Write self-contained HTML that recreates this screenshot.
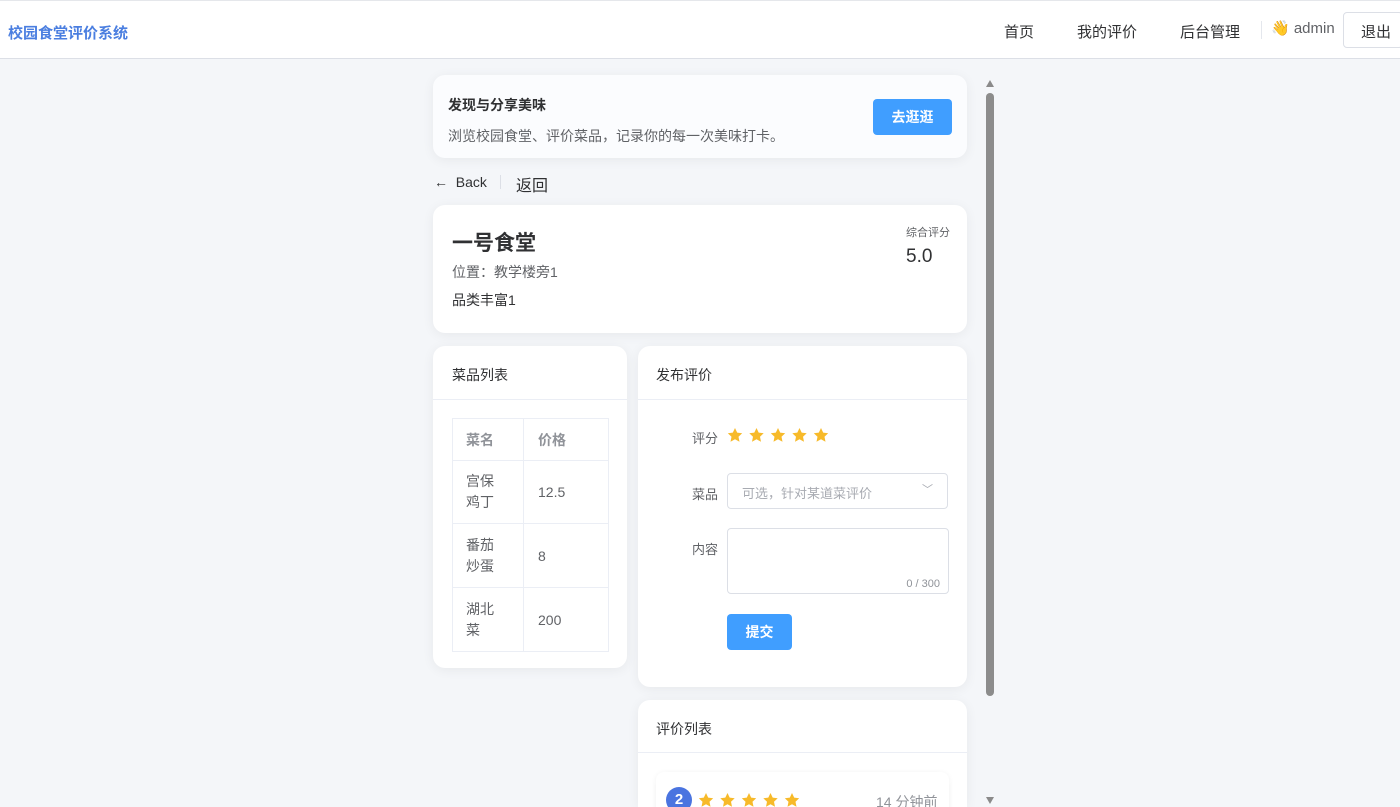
<!DOCTYPE html>
<html><head><meta charset="utf-8"><style>
*{box-sizing:border-box;margin:0;padding:0}
html{width:1400px;height:807px;overflow:hidden}
body{width:1400px;height:807px;overflow:hidden;background:#f4f6f9;font-family:"Liberation Sans","Noto Sans CJK SC",sans-serif;color:#303133;position:relative}
.hdr{position:absolute;left:0;top:0;width:1400px;height:59px;background:#fff;border-top:1px solid #e5e7eb;border-bottom:1px solid #dcdfe6}
.abs{position:absolute}
.card{position:absolute;background:#fff;border-radius:12px;box-shadow:0 2px 12px rgba(0,0,0,.06)}
</style></head><body>
<div class="hdr">
 <div class="abs" style="left:8px;top:21px;font-size:15px;font-weight:bold;color:#4a7ee0">校园食堂评价系统</div>
 <div class="abs" style="left:1004px;top:20px;font-size:15px;color:#303133">首页</div>
 <div class="abs" style="left:1077px;top:20px;font-size:15px">我的评价</div>
 <div class="abs" style="left:1180px;top:20px;font-size:15px">后台管理</div>
 <div class="abs" style="left:1261px;top:20px;width:1px;height:18px;background:#e4e7ed"></div>
 <div class="abs" style="left:1271px;top:18px;font-size:15px;color:#606266">👋 admin</div>
 <div class="abs" style="left:1343px;top:11px;width:60px;height:36px;border:1px solid #dcdfe6;border-radius:4px;background:#fff;font-size:15px;padding:8px 0 0 17px">退出</div>
</div>
<div class="card" style="left:433px;top:75px;width:534px;height:83px;background:#fbfcfe">
 <div class="abs" style="left:15px;top:20px;font-size:14px;font-weight:bold">发现与分享美味</div>
 <div class="abs" style="left:15px;top:51px;font-size:14px;color:#606266">浏览校园食堂、评价菜品，记录你的每一次美味打卡。</div>
 <div class="abs" style="left:440px;top:24px;width:79px;height:36px;background:#409eff;border-radius:4px;color:#fff;font-size:14px;font-weight:bold;text-align:center;line-height:36px">去逛逛</div>
</div>
<div class="abs" style="left:434px;top:174px;font-size:14px;color:#303133">←&nbsp; Back</div>
<div class="abs" style="left:500px;top:175px;width:1px;height:14px;background:#dcdfe6"></div>
<div class="abs" style="left:516px;top:172px;font-size:16px">返回</div>
<div class="card" style="left:433px;top:205px;width:534px;height:128px">
 <div class="abs" style="left:19px;top:22px;font-size:21px;font-weight:bold">一号食堂</div>
 <div class="abs" style="left:19px;top:57px;font-size:14px;color:#606266">位置：教学楼旁1</div>
 <div class="abs" style="left:19px;top:85px;font-size:14px">品类丰富1</div>
 <div class="abs" style="left:473px;top:19px;font-size:11px;color:#606266">综合评分</div>
 <div class="abs" style="left:473px;top:41px;font-size:19px">5.0</div>
</div>
<div class="card" style="left:433px;top:346px;width:194px;height:322px">
 <div class="abs" style="left:19px;top:19px;font-size:14px">菜品列表</div>
 <div class="abs" style="left:0;top:53px;width:194px;height:1px;background:#ebeef5"></div>
 <table class="abs" style="left:19px;top:72px;width:157px;border-collapse:collapse;font-size:14px;color:#606266">
  <tr style="height:42px"><td style="border:1px solid #ebeef5;width:71px;padding-left:13px;font-weight:bold;color:#909399">菜名</td><td style="border:1px solid #ebeef5;padding-left:14px;font-weight:bold;color:#909399">价格</td></tr>
  <tr style="height:63px"><td style="border:1px solid #ebeef5;padding-left:13px;line-height:21px">宫保<br>鸡丁</td><td style="border:1px solid #ebeef5;padding-left:14px">12.5</td></tr>
  <tr style="height:64px"><td style="border:1px solid #ebeef5;padding-left:13px;line-height:21px">番茄<br>炒蛋</td><td style="border:1px solid #ebeef5;padding-left:14px">8</td></tr>
  <tr style="height:64px"><td style="border:1px solid #ebeef5;padding-left:13px;line-height:21px">湖北<br>菜</td><td style="border:1px solid #ebeef5;padding-left:14px">200</td></tr>
 </table>
</div>
<div class="card" style="left:638px;top:346px;width:329px;height:341px">
 <div class="abs" style="left:18px;top:19px;font-size:14px">发布评价</div>
 <div class="abs" style="left:0;top:53px;width:329px;height:1px;background:#ebeef5"></div>
 <div class="abs" style="left:54px;top:82px;font-size:13px;color:#606266">评分</div>
 <svg class="abs" style="left:89px;top:81px" width="106" height="18" viewBox="0 0 106 18" fill="#f7ba2a"><g id="s"><path d="M8 1l2.2 4.6 5 .6-3.7 3.5 1 5L8 12.3 3.5 14.7l1-5L.8 6.2l5-.6z"/></g><use href="#s" x="21.5"/><use href="#s" x="43"/><use href="#s" x="64.5"/><use href="#s" x="86"/></svg>
 <div class="abs" style="left:54px;top:138px;font-size:13px;color:#606266">菜品</div>
 <div class="abs" style="left:89px;top:127px;width:221px;height:36px;border:1px solid #dcdfe6;border-radius:4px;font-size:13px;color:#a8abb2;padding:9px 0 0 14px">可选，针对某道菜评价<span style="position:absolute;right:14px;top:7px;font-size:11px;color:#a8abb2">﹀</span></div>
 <div class="abs" style="left:54px;top:193px;font-size:13px;color:#606266">内容</div>
 <div class="abs" style="left:89px;top:182px;width:222px;height:66px;border:1px solid #dcdfe6;border-radius:4px"><span style="position:absolute;right:8px;bottom:3px;font-size:11px;color:#909399">0 / 300</span></div>
 <div class="abs" style="left:89px;top:268px;width:65px;height:36px;background:#409eff;border-radius:4px;color:#fff;font-size:14px;font-weight:bold;text-align:center;line-height:36px">提交</div>
</div>
<div class="card" style="left:638px;top:700px;width:329px;height:107px;border-radius:12px 12px 0 0;overflow:hidden">
 <div class="abs" style="left:18px;top:19px;font-size:14px">评价列表</div>
 <div class="abs" style="left:0;top:52px;width:329px;height:1px;background:#ebeef5"></div>
 <div class="abs" style="left:18px;top:72px;width:293px;height:60px;border-radius:8px;box-shadow:0 1px 6px rgba(0,0,0,.06)">
  <div class="abs" style="left:10px;top:15px;width:26px;height:26px;border-radius:50%;background:#4a74e0;color:#fff;font-size:15px;font-weight:bold;text-align:center;line-height:26px">2</div>
  <svg class="abs" style="left:42px;top:20px" width="106" height="18" viewBox="0 0 106 18" fill="#f7ba2a"><use href="#s"/><use href="#s" x="21.5"/><use href="#s" x="43"/><use href="#s" x="64.5"/><use href="#s" x="86"/></svg>
  <div class="abs" style="left:220px;top:20px;font-size:14px;color:#909399">14 分钟前</div>
 </div>
</div>
<div class="abs" style="left:985px;top:78px;width:10px;height:729px">
 <div class="abs" style="left:1px;top:2px;width:0;height:0;border-left:4px solid transparent;border-right:4px solid transparent;border-bottom:7px solid #8a8a8a"></div>
 <div class="abs" style="left:1px;top:15px;width:8px;height:603px;border-radius:4px;background:#8c8c8c"></div>
 <div class="abs" style="left:1px;top:719px;width:0;height:0;border-left:4px solid transparent;border-right:4px solid transparent;border-top:7px solid #8a8a8a"></div>
</div>
</body></html>
